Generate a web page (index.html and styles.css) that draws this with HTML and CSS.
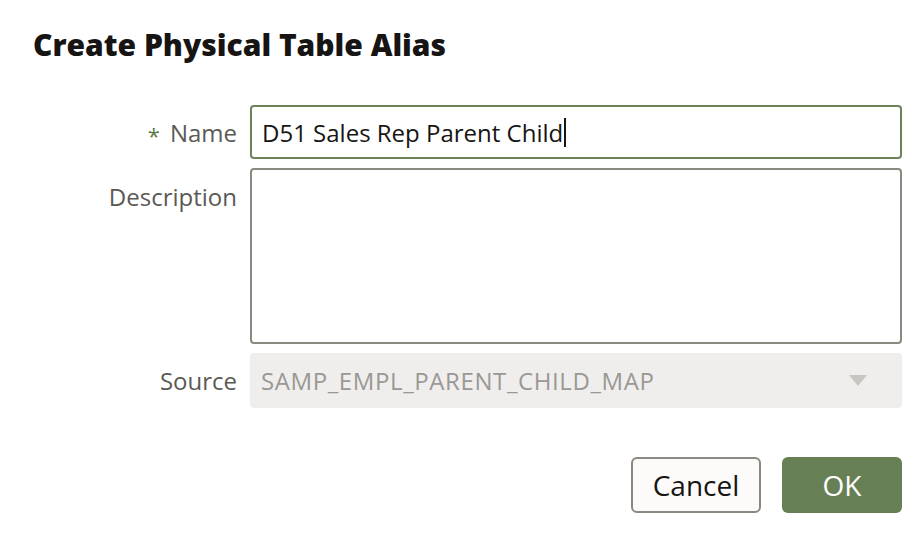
FILE: index.html
```html
<!DOCTYPE html>
<html>
<head>
<meta charset="utf-8">
<link rel="stylesheet" href="styles.css">
</head>
<body>
<div class="dialog">
  <h1 class="title">Create Physical Table Alias</h1>
  <div class="form">
    <div class="label label-name"><span class="req">*</span> Name</div>
    <div class="field field-name"><span class="value">D51 Sales Rep Parent Child</span><span class="caret"></span></div>
    <div class="label label-desc">Description</div>
    <div class="field field-desc"></div>
    <div class="label label-src">Source</div>
    <div class="field field-src"><span class="src-value">SAMP_EMPL_PARENT_CHILD_MAP</span><span class="arrow"></span></div>
  </div>
  <div class="actions">
    <button class="btn btn-cancel">Cancel</button>
    <button class="btn btn-ok">OK</button>
  </div>
</div>
</body>
</html>
```
FILE: styles.css
```css
html, body {
  margin: 0;
  padding: 0;
  background: #ffffff;
}
body {
  font-family: "Open Sans", "Noto Sans", sans-serif;
  color: #161513;
}
.dialog {
  width: 920px;
  height: 548px;
  box-sizing: border-box;
  padding-top: 25px;
}
.title {
  margin: 0 0 0 33px;
  font-size: 30px;
  line-height: 40px;
  font-weight: 800;
  color: #161513;
}
.form {
  margin-top: 40px;
  display: grid;
  grid-template-columns: 237px 652px;
  column-gap: 13px;
  row-gap: 9px;
}
.label {
  text-align: right;
  font-size: 24px;
  color: #5b5955;
  display: flex;
  align-items: center;
  justify-content: flex-end;
}
.label-desc {
  align-items: flex-start;
  padding-top: 12px;
}
.req {
  color: #5e7a4a;
  margin-right: 10px;
  font-size: 22px;
  position: relative;
  top: 3px;
}
.field {
  box-sizing: border-box;
  border-radius: 4px;
  display: flex;
  align-items: center;
}
.field-name {
  height: 54px;
  border: 2px solid #6c8358;
  padding-left: 10px;
  font-size: 24px;
  color: #161513;
}
.caret {
  display: inline-block;
  width: 2px;
  height: 29px;
  background: #161513;
  margin-left: 1px;
}
.field-desc {
  height: 176px;
  border: 2px solid #8b8781;
}
.field-src {
  height: 55px;
  background: #efeeed;
  padding-left: 11px;
  padding-right: 35px;
  justify-content: space-between;
  font-size: 24px;
  letter-spacing: 0.6px;
  color: #9a9894;
}
.arrow {
  width: 0;
  height: 0;
  border-left: 9px solid transparent;
  border-right: 9px solid transparent;
  border-top: 11px solid #c9c6c2;
}
.actions {
  margin-top: 49px;
  display: flex;
  justify-content: flex-end;
  gap: 21px;
  padding-right: 18px;
}
.btn {
  height: 56px;
  border-radius: 6px;
  font-family: "Open Sans", "Noto Sans", sans-serif;
  font-size: 28px;
  padding: 0;
  cursor: pointer;
}
.btn-cancel {
  width: 130px;
  background: #fcfbfa;
  border: 2px solid #8b8781;
  color: #161513;
}
.btn-ok {
  width: 120px;
  background: #677f55;
  border: none;
  color: #ffffff;
}
```
